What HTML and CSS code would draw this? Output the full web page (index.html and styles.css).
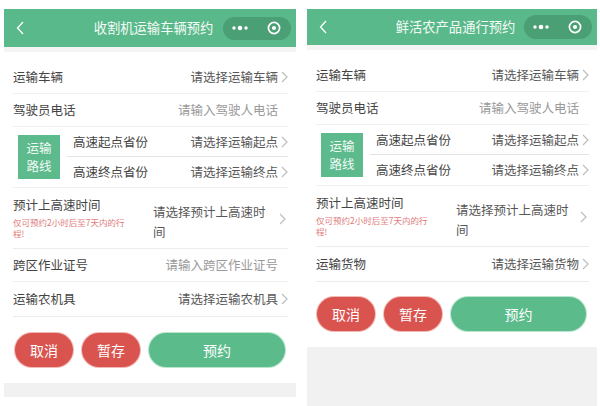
FILE: index.html
```html
<!DOCTYPE html>
<html lang="zh-CN">
<head>
<meta charset="utf-8">
<title>预约</title>
<link rel="stylesheet" href="styles.css">
</head>
<body>
<div class="screens">
  <section class="phone phone-a">
    <header class="nav">
      <svg class="nav-back" viewBox="0 0 8 14"><polyline points="7,1 1.5,7 7,13" fill="none" stroke="#fff" stroke-width="1.3"/></svg>
      <h1 class="nav-title">收割机运输车辆预约</h1>
      <div class="capsule">
        <svg class="cap-dots" viewBox="0 0 18 6"><circle cx="3" cy="3" r="1.7" fill="#fff"/><circle cx="9" cy="3" r="2.3" fill="#fff"/><circle cx="15" cy="3" r="1.7" fill="#fff"/></svg>
        <svg class="cap-close" viewBox="0 0 14 14"><circle cx="7" cy="7" r="5.6" fill="none" stroke="#fff" stroke-width="1.7"/><circle cx="7" cy="7" r="2.1" fill="#fff"/></svg>
      </div>
    </header>
    <div class="strip"></div>
    <div class="form">
      <div class="row"><span class="label">运输车辆</span><span class="value">请选择运输车辆</span><svg class="chev" viewBox="0 0 7 12"><polyline points="1,1 6,6 1,11" fill="none" stroke="#bdbdbd" stroke-width="1.2"/></svg></div>
      <div class="row"><span class="label">驾驶员电话</span><span class="value placeholder">请输入驾驶人电话</span><span class="chev-gap"></span></div>
      <div class="route">
        <div class="route-tag">运输<br>路线</div>
        <div class="route-rows">
          <div class="row sub"><span class="label">高速起点省份</span><span class="value">请选择运输起点</span><svg class="chev" viewBox="0 0 7 12"><polyline points="1,1 6,6 1,11" fill="none" stroke="#bdbdbd" stroke-width="1.2"/></svg></div>
          <div class="row sub last"><span class="label">高速终点省份</span><span class="value">请选择运输终点</span><svg class="chev" viewBox="0 0 7 12"><polyline points="1,1 6,6 1,11" fill="none" stroke="#bdbdbd" stroke-width="1.2"/></svg></div>
        </div>
      </div>
      <div class="row time">
        <div class="time-label">
          <div class="label">预计上高速时间</div>
          <div class="hint">仅可预约2小时后至7天内的行<br>程!</div>
        </div>
        <span class="value time-value">请选择预计上高速时<br>间</span>
        <svg class="chev" viewBox="0 0 7 12"><polyline points="1,1 6,6 1,11" fill="none" stroke="#bdbdbd" stroke-width="1.2"/></svg>
      </div>
      <div class="row"><span class="label">跨区作业证号</span><span class="value placeholder">请输入跨区作业证号</span><span class="chev-gap"></span></div>
      <div class="row tall"><span class="label">运输农机具</span><span class="value">请选择运输农机具</span><svg class="chev" viewBox="0 0 7 12"><polyline points="1,1 6,6 1,11" fill="none" stroke="#bdbdbd" stroke-width="1.2"/></svg></div>
    </div>
    <div class="actions">
      <button class="btn btn-red">取消</button>
      <button class="btn btn-red">暂存</button>
      <button class="btn btn-green">预约</button>
    </div>
    <div class="foot foot-a"></div>
  </section>

  <section class="phone phone-b">
    <header class="nav">
      <svg class="nav-back" viewBox="0 0 8 14"><polyline points="7,1 1.5,7 7,13" fill="none" stroke="#fff" stroke-width="1.3"/></svg>
      <h1 class="nav-title">鲜活农产品通行预约</h1>
      <div class="capsule">
        <svg class="cap-dots" viewBox="0 0 18 6"><circle cx="3" cy="3" r="1.7" fill="#fff"/><circle cx="9" cy="3" r="2.3" fill="#fff"/><circle cx="15" cy="3" r="1.7" fill="#fff"/></svg>
        <svg class="cap-close" viewBox="0 0 14 14"><circle cx="7" cy="7" r="5.6" fill="none" stroke="#fff" stroke-width="1.7"/><circle cx="7" cy="7" r="2.1" fill="#fff"/></svg>
      </div>
    </header>
    <div class="strip"></div>
    <div class="form">
      <div class="row"><span class="label">运输车辆</span><span class="value">请选择运输车辆</span><svg class="chev" viewBox="0 0 7 12"><polyline points="1,1 6,6 1,11" fill="none" stroke="#bdbdbd" stroke-width="1.2"/></svg></div>
      <div class="row"><span class="label">驾驶员电话</span><span class="value placeholder">请输入驾驶人电话</span><span class="chev-gap"></span></div>
      <div class="route">
        <div class="route-tag">运输<br>路线</div>
        <div class="route-rows">
          <div class="row sub"><span class="label">高速起点省份</span><span class="value">请选择运输起点</span><svg class="chev" viewBox="0 0 7 12"><polyline points="1,1 6,6 1,11" fill="none" stroke="#bdbdbd" stroke-width="1.2"/></svg></div>
          <div class="row sub last"><span class="label">高速终点省份</span><span class="value">请选择运输终点</span><svg class="chev" viewBox="0 0 7 12"><polyline points="1,1 6,6 1,11" fill="none" stroke="#bdbdbd" stroke-width="1.2"/></svg></div>
        </div>
      </div>
      <div class="row time">
        <div class="time-label">
          <div class="label">预计上高速时间</div>
          <div class="hint">仅可预约2小时后至7天内的行<br>程!</div>
        </div>
        <span class="value time-value">请选择预计上高速时<br>间</span>
        <svg class="chev" viewBox="0 0 7 12"><polyline points="1,1 6,6 1,11" fill="none" stroke="#bdbdbd" stroke-width="1.2"/></svg>
      </div>
      <div class="row tall"><span class="label">运输货物</span><span class="value">请选择运输货物</span><svg class="chev" viewBox="0 0 7 12"><polyline points="1,1 6,6 1,11" fill="none" stroke="#bdbdbd" stroke-width="1.2"/></svg></div>
    </div>
    <div class="actions">
      <button class="btn btn-red">取消</button>
      <button class="btn btn-red">暂存</button>
      <button class="btn btn-green">预约</button>
    </div>
    <div class="foot foot-b"></div>
  </section>
</div>
</body>
</html>
```

FILE: styles.css
```css
* { box-sizing: border-box; }

html, body {
  margin: 0;
  background: #ffffff;
  font-family: "Noto Sans CJK SC", "Noto Sans", sans-serif;
}

.screens {
  display: flex;
  gap: 11px;
  padding: 9px 0 0 4px;
}

.phone {
  display: flex;
  flex-direction: column;
  background: #fff;
}
.phone-a { width: 292px; }
.phone-b { width: 290px; }

/* navigation bar */
.nav {
  height: 38px;
  background: #5ab98a;
  display: grid;
  grid-template-columns: 1fr auto 1fr;
  align-items: center;
  padding: 0 5px 0 12px;
}
.phone-b .nav { height: 36px; }

.nav-back {
  width: 8px;
  height: 14px;
  justify-self: start;
}

.nav-title {
  margin: 0;
  font-size: 13.3px;
  font-weight: 400;
  color: #f4fbf7;
  line-height: 18px;
  white-space: nowrap;
}

.capsule {
  justify-self: end;
  width: 68px;
  height: 23px;
  border-radius: 12px;
  background: #4a9f75;
  display: flex;
  align-items: center;
  padding: 0 10px 0 8px;
  justify-content: space-between;
}
.phone-b .capsule { height: 24px; }
.cap-dots { width: 18px; height: 6px; }
.cap-close { width: 14px; height: 14px; }

.strip {
  height: 5px;
  background: #f4f4f4;
}

/* form list */
.form {
  padding: 9px 8px 0 9px;
}

.row {
  display: flex;
  align-items: center;
  height: 33px;
  border-bottom: 1px solid #f0f0f0;
  font-size: 12.5px;
  line-height: 18px;
}
.row.tall { height: 35px; border-bottom-color: #ececec; }

.label {
  color: #444;
  white-space: nowrap;
}

.value {
  margin-left: auto;
  color: #585858;
  white-space: nowrap;
}
.value.placeholder { color: #9a9a9a; }

.chev {
  flex: none;
  width: 7px;
  height: 12px;
  margin-left: 3px;
}
.chev-gap {
  flex: none;
  width: 10px;
}

/* route group */
.route {
  display: flex;
  align-items: center;
  height: 61px;
  border-bottom: 1px solid #f0f0f0;
}
.route-tag {
  flex: none;
  width: 42px;
  height: 44px;
  margin-left: 5px;
  background: #5dba8c;
  color: #f2fbf6;
  font-size: 12.5px;
  line-height: 18px;
  text-align: center;
  display: flex;
  align-items: center;
  justify-content: center;
}
.route-rows {
  flex: 1;
  margin-left: 7px;
}
.row.sub {
  height: 30px;
  padding-left: 6px;
  border-bottom: 1px solid #e4e4e4;
}
.row.sub.last { border-bottom: none; }

/* time row */
.row.time {
  height: 61px;
  border-bottom-color: #ececec;
}
.time-label {
  align-self: flex-start;
  width: 125px;
  padding-top: 8px;
}
.hint {
  margin-top: 3px;
  font-size: 8.5px;
  line-height: 11px;
  color: #e07a7a;
  white-space: nowrap;
}
.time-value {
  margin-left: 15px;
  line-height: 20px;
  padding-top: 8px;
  flex: 1;
  white-space: nowrap;
}
.row.time .chev { margin-left: 8px; margin-right: 2px; margin-top: 2px; }

/* actions */
.actions {
  display: flex;
  gap: 9px;
  padding: 16px 11px 16px 11px;
}
.phone-b .actions { padding-top: 15px; padding-left: 10px; }
.btn {
  height: 34px;
  border: none;
  border-radius: 17px;
  color: #fff;
  font-family: inherit;
  font-size: 14px;
  line-height: 34px;
  padding: 0;
}
.btn-red {
  width: 58px;
  background: #d9544f;
  box-shadow: 0 0 0 1px #f2b9b5;
}
.btn-green {
  flex: 1;
  background: #5bbb8b;
  box-shadow: 0 0 0 1px #b9e6cd;
}

.foot { background: #f1f1f1; }
.foot-a { height: 14px; }
.foot-b { height: 60px; }
```
